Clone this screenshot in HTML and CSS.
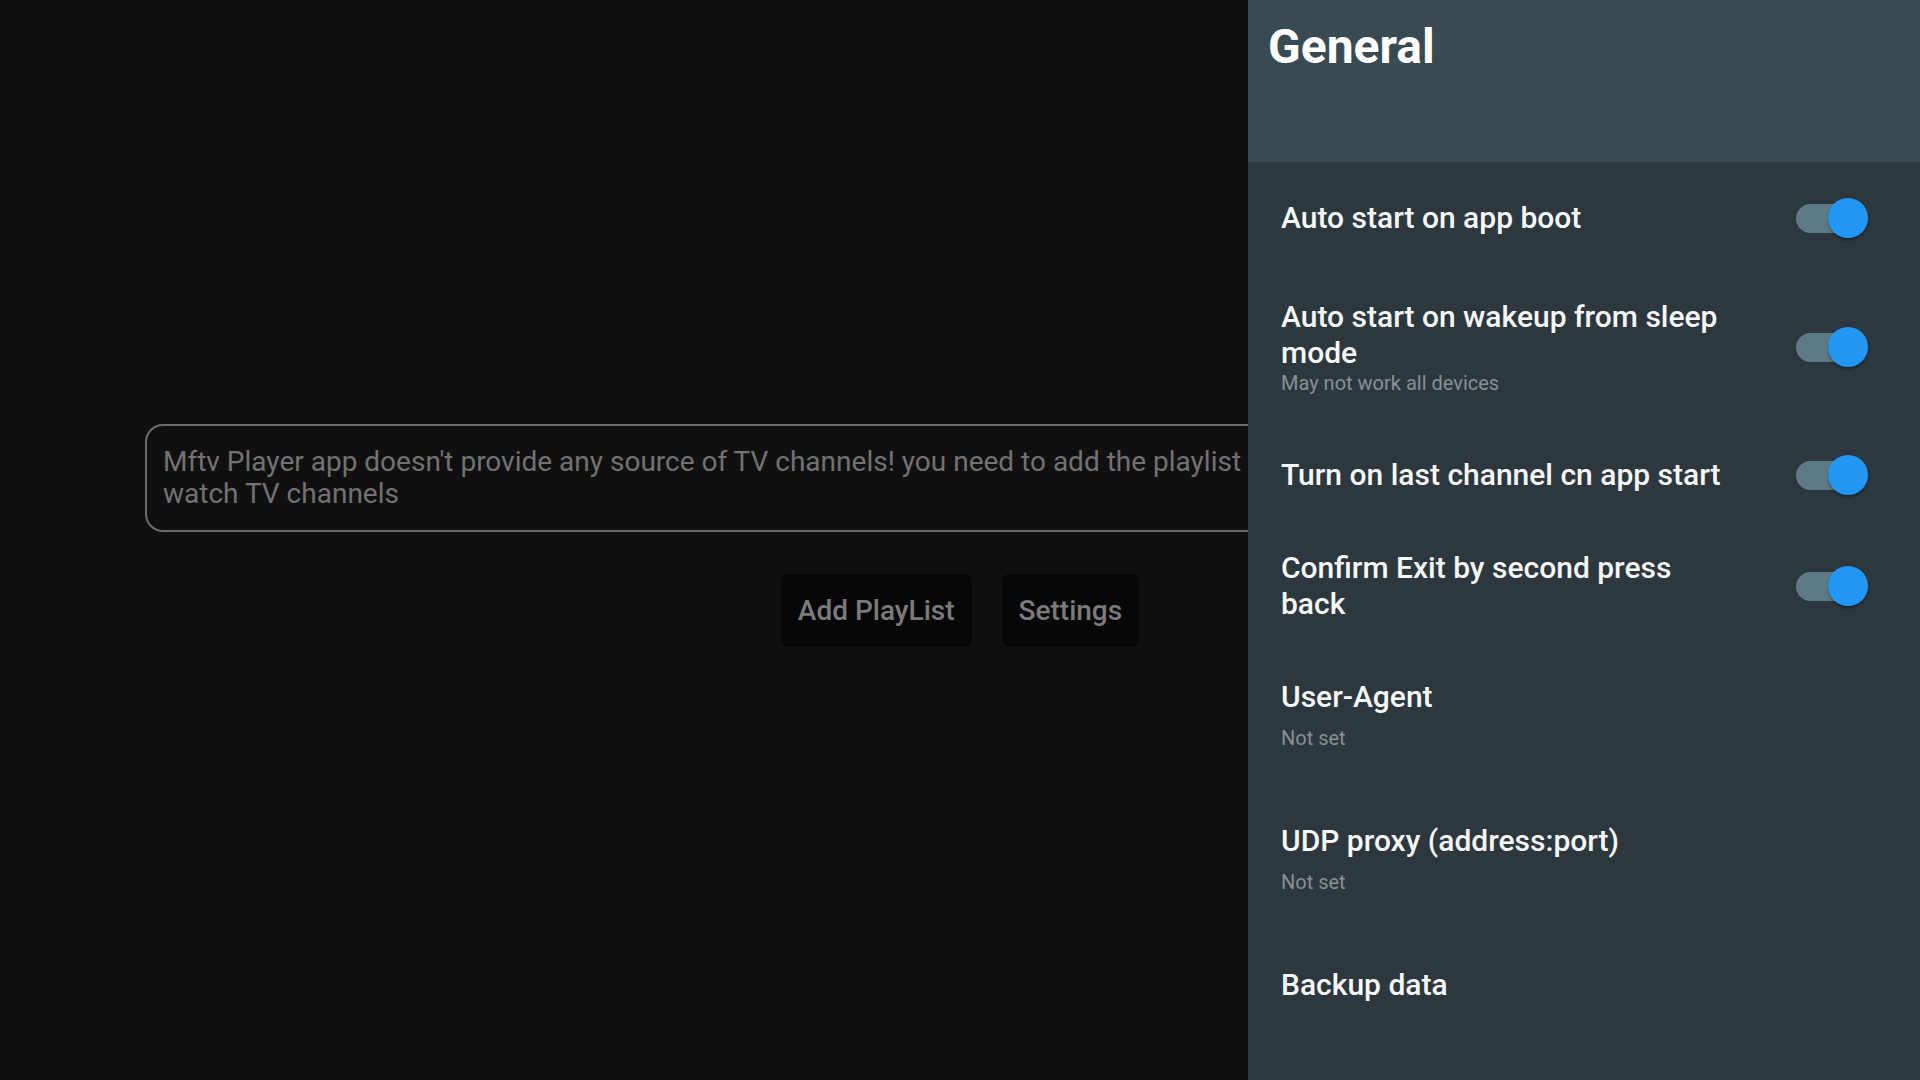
FILE: index.html
```html
<!DOCTYPE html>
<html lang="en">
<head>
<meta charset="utf-8">
<title>Mftv Player</title>
<link rel="stylesheet" href="styles.css">
</head>
<body>
<main class="stage">
  <div class="notice">Mftv Player app doesn't provide any source of TV channels! you need to add the playlist to watch TV channels</div>
  <div class="actions">
    <button class="btn">Add PlayList</button>
    <button class="btn">Settings</button>
  </div>
</main>

<aside class="drawer">
  <header class="drawer-head">
    <h1 class="drawer-title">General</h1>
  </header>
  <ul class="prefs">
    <li class="pref">
      <div class="pref-text"><div class="pref-title">Auto start on app boot</div></div>
      <span class="switch"><span class="knob"></span></span>
    </li>
    <li class="pref pref-tall">
      <div class="pref-text">
        <div class="pref-title">Auto start on wakeup from sleep mode</div>
        <div class="pref-sum">May not work all devices</div>
      </div>
      <span class="switch"><span class="knob"></span></span>
    </li>
    <li class="pref">
      <div class="pref-text"><div class="pref-title">Turn on last channel cn app start</div></div>
      <span class="switch"><span class="knob"></span></span>
    </li>
    <li class="pref">
      <div class="pref-text"><div class="pref-title">Confirm Exit by second press back</div></div>
      <span class="switch"><span class="knob"></span></span>
    </li>
    <li class="pref pref-edit">
      <div class="pref-text">
        <div class="pref-title">User-Agent</div>
        <div class="pref-sum pref-sum-gap">Not set</div>
      </div>
    </li>
    <li class="pref pref-edit">
      <div class="pref-text">
        <div class="pref-title">UDP proxy (address:port)</div>
        <div class="pref-sum pref-sum-gap">Not set</div>
      </div>
    </li>
    <li class="pref">
      <div class="pref-text"><div class="pref-title">Backup data</div></div>
    </li>
  </ul>
</aside>
</body>
</html>
```

FILE: styles.css
```css
* { box-sizing: border-box; }

html, body {
  margin: 0;
  padding: 0;
  width: 1920px;
  height: 1080px;
  overflow: hidden;
  background: #101010;
  font-family: Roboto, "Noto Sans", "Liberation Sans", sans-serif;
}

.stage {
  padding-top: 424px;
  padding-left: 145px;
  height: 1080px;
}

.notice {
  width: 1180px;
  border: 2px solid #6c6c6c;
  border-radius: 18px;
  padding: 20px 16px;
  color: #727272;
  font-size: 28px;
  line-height: 32px;
}

.actions {
  display: flex;
  justify-content: center;
  gap: 30px;
  margin-top: 42px;
  width: 1630px;
}

.btn {
  height: 73px;
  padding: 0 17px;
  border: none;
  border-radius: 8px;
  background: #070707;
  color: #7b7b7b;
  font-family: Roboto, "Noto Sans", sans-serif;
  font-size: 28px;
  font-weight: 500;
}

.drawer {
  position: absolute;
  top: 0;
  right: 0;
  width: 672px;
  height: 1080px;
  background: #2c373e;
}

.drawer-head {
  height: 162px;
  background: #3a4a53;
  padding: 23px 0 0 20px;
}

.drawer-title {
  margin: 0;
  color: #ffffff;
  font-size: 48px;
  line-height: 48px;
  font-weight: 700;
}

.prefs {
  list-style: none;
  margin: 0;
  padding: 1px 0 0;
}

.pref {
  display: flex;
  align-items: center;
  min-height: 110px;
  padding: 20px 52px 20px 33px;
}

.pref-tall { min-height: 147px; }
.pref-edit { min-height: 144px; }

.pref-text {
  flex: 1;
  margin-right: 72px;
}

.pref-title {
  color: #f7f7f7;
  font-size: 30px;
  line-height: 36px;
  font-weight: 500;
}

.pref-sum {
  color: #8a9094;
  font-size: 20px;
  line-height: 24px;
}

.pref-sum-gap { margin-top: 11px; }

.switch {
  position: relative;
  flex: none;
  width: 72px;
  height: 40px;
}

.switch::before {
  content: "";
  position: absolute;
  left: 0;
  top: 6px;
  width: 66px;
  height: 29px;
  border-radius: 15px;
  background: #5e7a87;
}

.knob {
  position: absolute;
  right: 0;
  top: 0;
  width: 40px;
  height: 40px;
  border-radius: 50%;
  background: #2196f3;
  box-shadow: 0 2px 3px rgba(0, 0, 0, 0.35);
}
```
